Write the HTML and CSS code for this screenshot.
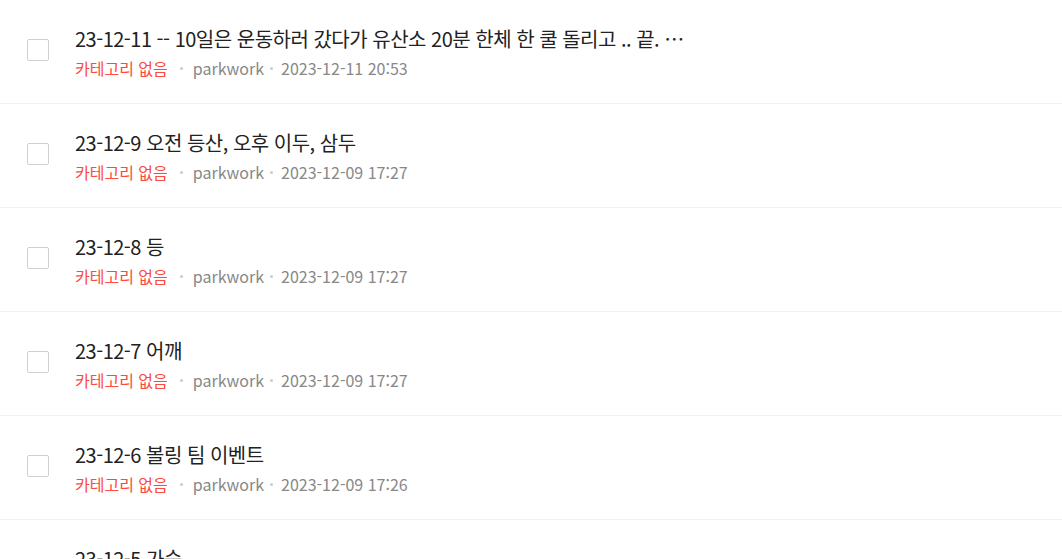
FILE: index.html
```html
<!DOCTYPE html>
<html lang="ko">
<head>
    <meta charset="UTF-8">
    <title>글 목록</title>
    <link rel="stylesheet" href="styles.css">
</head>
<body>

<ul class="post-list">
    <li class="post-item">
        <span class="check"></span>
        <div class="post-body">
            <div class="post-title">23-12-11 -- 10일은 운동하러 갔다가 유산소 20분 한체 한 쿨 돌리고 .. 끝. …</div>
            <div class="post-meta">
                <span class="category">카테고리 없음</span>
                <span class="dot"></span>
                <span class="author">parkwork</span>
                <span class="dot"></span>
                <span class="date">2023-12-11 20:53</span>
            </div>
        </div>
    </li>
    <li class="post-item">
        <span class="check"></span>
        <div class="post-body">
            <div class="post-title">23-12-9 오전 등산, 오후 이두, 삼두</div>
            <div class="post-meta">
                <span class="category">카테고리 없음</span>
                <span class="dot"></span>
                <span class="author">parkwork</span>
                <span class="dot"></span>
                <span class="date">2023-12-09 17:27</span>
            </div>
        </div>
    </li>
    <li class="post-item">
        <span class="check"></span>
        <div class="post-body">
            <div class="post-title">23-12-8 등</div>
            <div class="post-meta">
                <span class="category">카테고리 없음</span>
                <span class="dot"></span>
                <span class="author">parkwork</span>
                <span class="dot"></span>
                <span class="date">2023-12-09 17:27</span>
            </div>
        </div>
    </li>
    <li class="post-item">
        <span class="check"></span>
        <div class="post-body">
            <div class="post-title">23-12-7 어깨</div>
            <div class="post-meta">
                <span class="category">카테고리 없음</span>
                <span class="dot"></span>
                <span class="author">parkwork</span>
                <span class="dot"></span>
                <span class="date">2023-12-09 17:27</span>
            </div>
        </div>
    </li>
    <li class="post-item">
        <span class="check"></span>
        <div class="post-body">
            <div class="post-title">23-12-6 볼링 팀 이벤트</div>
            <div class="post-meta">
                <span class="category">카테고리 없음</span>
                <span class="dot"></span>
                <span class="author">parkwork</span>
                <span class="dot"></span>
                <span class="date">2023-12-09 17:26</span>
            </div>
        </div>
    </li>
    <li class="post-item">
        <span class="check"></span>
        <div class="post-body">
            <div class="post-title">23-12-5 가슴</div>
        </div>
    </li>
</ul>

</body>
</html>
```

FILE: styles.css
```css
body {
    margin: 0;
    background: #fff;
    font-family: "Noto Sans CJK KR", "Noto Sans", sans-serif;
    overflow: hidden;
}
.post-list {
    list-style: none;
    margin: 0;
    padding: 0;
}
.post-item {
    display: flex;
    align-items: flex-start;
    height: 103px;
    border-bottom: 1px solid #f1f1f3;
}
.check {
    flex: none;
    width: 20px;
    height: 20px;
    margin: 39px 0 0 27px;
    border: 1px solid #cdd1d6;
    border-radius: 2px;
}
.post-body {
    margin-left: 26px;
    padding-top: 24px;
}
.post-title {
    font-size: 20px;
    line-height: 30px;
    color: #222;
    letter-spacing: -0.5px;
}
.post-meta {
    display: flex;
    align-items: center;
    margin-top: -1px;
    font-size: 16px;
    line-height: 30px;
    color: #888;
}
.category {
    color: #fb4a3e;
}
.dot {
    width: 3px;
    height: 3px;
    border-radius: 50%;
    background: #ccc;
    margin: 0 8px 0 6px;
}
.category + .dot {
    margin-left: 12px;
    margin-right: 10px;
}
```
